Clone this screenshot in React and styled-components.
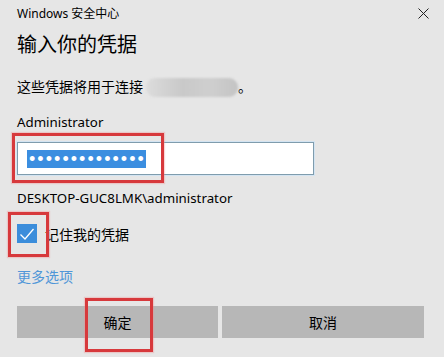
import React from 'react'
import styled, { createGlobalStyle } from 'styled-components'

const Global = createGlobalStyle`
  html, body {
    margin: 0;
    padding: 0;
    background: #e6e6e6;
  }
  body {
    font-family: "Noto Sans", "Noto Sans CJK SC", sans-serif;
    color: #000;
  }
`

const Dialog = styled.div`
  width: 444px;
  height: 357px;
  box-sizing: border-box;
  padding: 0 20px 0 17px;
  background: #e6e6e6;
  overflow: hidden;
  position: relative;
`

const TitleBar = styled.div`
  height: 26px;
  display: flex;
  align-items: center;
  justify-content: space-between;
  font-size: 12px;
  margin-right: -6px;
`

const Close = styled.button`
  width: 14px;
  height: 14px;
  padding: 0;
  border: 0;
  background: none;
  display: flex;
  align-items: center;
  justify-content: center;
`

const Heading = styled.h1`
  margin: 7px 0 0;
  font-size: 20px;
  font-weight: 400;
  line-height: 24px;
`

const Line = styled.div`
  margin-top: ${p => p.$top}px;
  font-size: ${p => (p.$latin ? 13.3 : 14)}px;
  line-height: 20px;
  display: flex;
  align-items: center;
`

const Hidden = styled.span`
  display: inline-block;
  width: 92px;
  height: 19px;
  margin-left: 3px;
  border-radius: 9px;
  background: linear-gradient(90deg, #dcdcdc, #c9c9c9 40%, #cfcfcf 70%, #c4c4c4);
  filter: blur(1px);
`

const Field = styled.div`
  position: relative;
  margin-top: 10px;
  width: 297px;
  height: 33px;
  box-sizing: border-box;
  background: #fff;
  border: 1px solid #7f9cad;
  box-shadow: 0 0 0 1px #d3e4f2;
  display: flex;
  align-items: center;
  padding-left: 9px;
`

const Selection = styled.span`
  display: inline-block;
  height: 18px;
  line-height: 18px;
  padding: 0 0 0 2px;
  background: #3b8ee0;
  color: #fff;
  font-family: "Liberation Sans", sans-serif;
  font-size: 18px;
  letter-spacing: 2.05px;
  overflow: hidden;
`

const CheckRow = styled.label`
  position: relative;
  margin-top: 16px;
  height: 19px;
  display: flex;
  align-items: center;
  gap: 8px;
  font-size: 14px;
`

const Box = styled.span`
  width: 20px;
  height: 19px;
  background: #3b8ddb;
  display: flex;
  align-items: center;
  justify-content: center;
`

const More = styled.a`
  display: block;
  margin-top: 24px;
  font-size: 14px;
  line-height: 20px;
  color: #4f96d8;
  text-decoration: none;
`

const Buttons = styled.div`
  position: relative;
  margin-top: 19px;
  display: grid;
  grid-template-columns: 201px 202px;
  gap: 4px;
`

const Button = styled.button`
  height: 32px;
  border: 0;
  background: #b7b7b7;
  font-family: inherit;
  font-size: 14px;
  color: #000;
  padding: 0;
`

const Mark = styled.div`
  position: absolute;
  left: ${p => p.$x}px;
  top: ${p => p.$y}px;
  width: ${p => p.$w}px;
  height: ${p => p.$h}px;
  box-sizing: border-box;
  border: 3px solid #d7393c;
  box-shadow: 0 0 1px 1px rgba(240, 140, 140, 0.35);
  pointer-events: none;
`

export default function App() {
  return (
    <>
      <Global />
      <Dialog>
        <TitleBar>
          <span>Windows 安全中心</span>
          <Close aria-label="关闭">
            <svg width="11" height="11" viewBox="0 0 11 11">
              <path d="M0.5 0.5 L10.5 10.5 M10.5 0.5 L0.5 10.5" stroke="#222" strokeWidth="1" />
            </svg>
          </Close>
        </TitleBar>
        <Heading>输入你的凭据</Heading>
        <Line $top={20}>
          这些凭据将用于连接<Hidden />。
        </Line>
        <Line $top={15} $latin>Administrator</Line>
        <Field>
          <Selection>••••••••••••••</Selection>
          <Mark $x={-6} $y={-10} $w={152} $h={50} />
        </Field>
        <Line $top={13} $latin>DESKTOP-GUC8LMK\administrator</Line>
        <CheckRow>
          <Box>
            <svg width="16" height="14" viewBox="0 0 16 14">
              <path d="M1.5 7.5 L6 12 L14.5 2" fill="none" stroke="#fff" strokeWidth="1.3" />
            </svg>
          </Box>
          <span>记住我的凭据</span>
          <Mark $x={-9} $y={-12} $w={41} $h={45} />
        </CheckRow>
        <More href="#">更多选项</More>
        <Buttons>
          <Button>确定</Button>
          <Button>取消</Button>
          <Mark $x={68} $y={-8} $w={68} $h={54} />
        </Buttons>
      </Dialog>
    </>
  )
}
